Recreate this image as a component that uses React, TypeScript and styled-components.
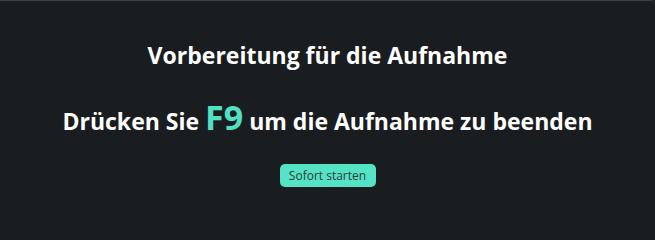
import React from "react";
import styled, { createGlobalStyle } from "styled-components";

const GlobalStyle = createGlobalStyle`
  html, body {
    margin: 0;
    padding: 0;
    background: #1a1d20;
  }
`;

const Panel = styled.div`
  box-sizing: border-box;
  width: 655px;
  height: 204px;
  background-color: #1a1d20;
  border-top: 1px solid #3d4247;
  border-radius: 0 5px 0 0;
  display: flex;
  flex-direction: column;
  align-items: center;
  padding-top: 38px;
  font-family: "Open Sans", "Noto Sans", sans-serif;
  color: #fff;
`;

const Title = styled.h2`
  margin: 0;
  font-size: 23px;
  font-weight: 700;
  line-height: 32px;
`;

const Hint = styled.p`
  margin: 29px 0 0;
  font-size: 23px;
  font-weight: 700;
  line-height: 40px;
`;

const Key = styled.span`
  color: #52e0c4;
  font-size: 34px;
  line-height: 1;
`;

const StartButton = styled.button`
  margin-top: 23px;
  width: 96px;
  height: 23px;
  padding: 0;
  border: none;
  border-radius: 5px;
  background-color: #55e3c5;
  color: #2c3a39;
  font-family: "Open Sans", "Noto Sans", sans-serif;
  font-size: 12px;
  cursor: pointer;
`;

const App = () => {
  return (
    <>
      <GlobalStyle />
      <Panel>
        <Title>Vorbereitung für die Aufnahme</Title>
        <Hint>
          Drücken Sie <Key>F9</Key> um die Aufnahme zu beenden
        </Hint>
        <StartButton>Sofort starten</StartButton>
      </Panel>
    </>
  );
};

export default App;
